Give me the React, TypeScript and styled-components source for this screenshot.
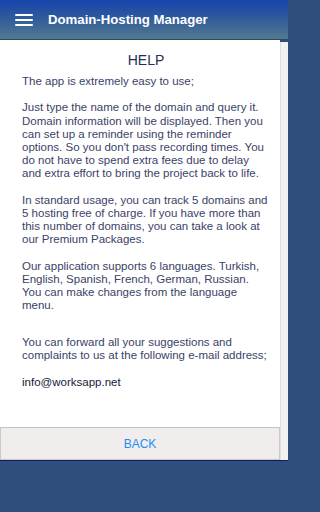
import styled, { createGlobalStyle } from "styled-components";

const Global = createGlobalStyle`
  html, body {
    margin: 0;
    padding: 0;
    background: #2f4f7a;
  }
  * {
    box-sizing: border-box;
  }
`;

const Screen = styled.div`
  width: 288px;
  height: 512px;
  display: flex;
  flex-direction: column;
  font-family: "Liberation Sans", Arial, sans-serif;
  overflow: hidden;
`;

const Header = styled.header`
  height: 40px;
  flex: none;
  display: flex;
  align-items: center;
  padding-left: 15px;
  gap: 15px;
  background: linear-gradient(180deg, #1743ad 0%, #2f5a9c 45%, #547a90 100%);
  border-bottom: 1px solid #2f4a62;
`;

const Burger = styled.div`
  width: 18px;
  display: flex;
  flex-direction: column;
  gap: 3px;

  span {
    height: 2px;
    background: #fff;
    border-radius: 1px;
  }
`;

const Title = styled.h1`
  margin: 0;
  color: #fff;
  font-size: 13.2px;
  font-weight: 700;
`;

const Body = styled.div`
  flex: 1;
  display: flex;
  min-height: 0;
`;

const Column = styled.div`
  flex: 1;
  display: flex;
  flex-direction: column;
  background: #fff;
`;

const Content = styled.div`
  flex: 1;
  padding: 12px 10px 0 22px;
  color: #3a4268;
  font-size: 11.5px;
  line-height: 13.2px;
`;

const Heading = styled.h2`
  margin: 0 0 7px;
  text-align: center;
  font-size: 14px;
  font-weight: 400;
  color: #262e58;
  line-height: 16px;
`;

const Para = styled.p<{ gap?: number }>`
  margin: 0 0 ${({ gap }) => gap ?? 13.2}px;
`;

const Mail = styled.p`
  margin: 0;
  color: #151a3a;
`;

const BackButton = styled.button`
  height: 33px;
  flex: none;
  width: 100%;
  border: 1px solid #cbc8c8;
  border-top: 1px solid #c4c4c4;
  background: #f2eded;
  color: #1e8ff0;
  font-family: "Liberation Sans", Arial, sans-serif;
  font-size: 12px;
  text-transform: uppercase;
  cursor: pointer;
`;

const Scrollbar = styled.div`
  width: 8px;
  flex: none;
  margin-top: 2px;
  background: #f1f1f1;
  border-left: 1px solid #dedede;
`;

const Footer = styled.div`
  height: 52px;
  flex: none;
  background: #2f4f7a;
  border-top: 1px solid #0d1f6a;
`;

export default function App() {
  return (
    <Screen>
      <Global />
      <Header>
        <Burger>
          <span />
          <span />
          <span />
        </Burger>
        <Title>Domain-Hosting Manager</Title>
      </Header>
      <Body>
        <Column>
          <Content>
            <Heading>HELP</Heading>
            <Para>The app is extremely easy to use;</Para>
            <Para>
              Just type the name of the domain and query it. Domain information
              will be displayed. Then you can set up a reminder using the
              reminder options. So you don't pass recording times. You do not
              have to spend extra fees due to delay and extra effort to bring
              the project back to life.
            </Para>
            <Para>
              In standard usage, you can track 5 domains and 5 hosting free of
              charge. If you have more than this number of domains, you can take
              a look at our Premium Packages.
            </Para>
            <Para gap={23.4}>
              Our application supports 6 languages. Turkish, English, Spanish,
              French, German, Russian. You can make changes from the language
              menu.
            </Para>
            <Para>
              You can forward all your suggestions and complaints to us at the
              following e-mail address;
            </Para>
            <Mail>info@worksapp.net</Mail>
          </Content>
          <BackButton>Back</BackButton>
        </Column>
        <Scrollbar />
      </Body>
      <Footer />
    </Screen>
  );
}
